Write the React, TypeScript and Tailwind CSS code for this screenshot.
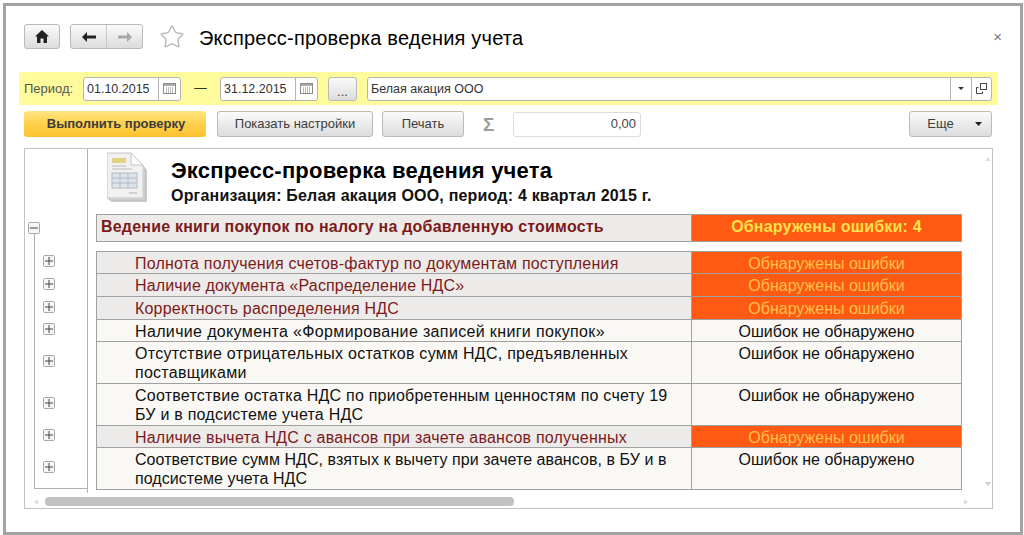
import React from 'react';
import { Star } from 'lucide-react';

type Row = { text: string[]; error: boolean; h: string; track: string };

const rows: Row[] = [
  { text: ['Полнота получения счетов-фактур по документам поступления'], error: true, h: 'h-[22px]', track: 'tracking-[0.2px]' },
  { text: ['Наличие документа «Распределение НДС»'], error: true, h: 'h-[23px]', track: 'tracking-[0.15px]' },
  { text: ['Корректность распределения НДС'], error: true, h: 'h-[23px]', track: 'tracking-[0.2px]' },
  { text: ['Наличие документа «Формирование записей книги покупок»'], error: false, h: 'h-[22px]', track: 'tracking-[0.35px]' },
  { text: ['Отсутствие отрицательных остатков сумм НДС, предъявленных', 'поставщиками'], error: false, h: 'h-[42px]', track: 'tracking-[0.27px]' },
  { text: ['Соответствие остатка НДС по приобретенным ценностям по счету 19', 'БУ и в подсистеме учета НДС'], error: false, h: 'h-[42px]', track: 'tracking-[0.23px]' },
  { text: ['Наличие вычета НДС с авансов при зачете авансов полученных'], error: true, h: 'h-[22px]', track: 'tracking-[0.2px]' },
  { text: ['Соответствие сумм НДС, взятых к вычету при зачете авансов, в БУ и в', 'подсистеме учета НДС'], error: false, h: 'h-[42px]', track: 'tracking-[0.05px]' },
];

const btn = 'flex items-center justify-center rounded-[3px] border border-[#b9b9b9] bg-gradient-to-b from-[#fbfbfb] to-[#dcdcdc] text-[13px] text-[#3d3d3d]';

const Calendar = () => (
  <svg width="13" height="11" viewBox="0 0 13 11">
    <rect x="0.5" y="0.5" width="12" height="10" fill="#fff" stroke="#8a8a8a" />
    <rect x="1" y="1" width="11" height="2" fill="#aaa" />
    <path d="M3 5h1M5 5h1M7 5h1M9 5h1M3 7h1M5 7h1M7 7h1M9 7h1M3 9h1M5 9h1M7 9h1M9 9h1" stroke="#777" />
  </svg>
);

const DateField = ({ value }: { value: string }) => (
  <div className="flex h-[24px] w-[98px] items-center rounded-[3px] border border-[#b5b5b5] bg-white text-[12.5px] text-[#333]">
    <span className="w-[74px] pl-[3px] pt-[1px]">{value}</span>
    <span className="flex h-full flex-1 items-center justify-center border-l border-[#b5b5b5]">
      <Calendar />
    </span>
  </div>
);

const TreeBox = ({ minus }: { minus?: boolean }) => (
  <svg width="12" height="12" viewBox="0 0 12 12" className="block shrink-0">
    <rect x="0.5" y="0.5" width="11" height="11" rx="1" fill="#f6f6f6" stroke="#a8a8a8" />
    <path d={minus ? 'M2 6h8' : 'M2 6h8M6 2v8'} stroke="#444" />
  </svg>
);

const DocIcon = () => (
  <svg width="42" height="52" viewBox="0 0 42 52" className="block">
    <path d="M4 6h24l12 12v32H4z" fill="#c9c9c9" />
    <path d="M2 4h24l12 12v32H2z" fill="#dedede" stroke="#bdbdbd" />
    <path d="M0 1h24l12 12v33H0z" fill="#f1f1f1" stroke="#c4c4c4" />
    <path d="M24 1v12h12z" fill="#fff" stroke="#c4c4c4" />
    <rect x="5" y="6" width="14" height="5" fill="#e3d27e" />
    <path d="M5 14h14M5 17h20" stroke="#bcbcbc" />
    <rect x="5" y="21" width="25" height="15" fill="#dde3e9" stroke="#b3bcc6" />
    <path d="M13 21v15M21 21v15M5 26h25M5 31h25" stroke="#b3bcc6" />
    <path d="M22 41h8" stroke="#b0b0b0" />
  </svg>
);

export default function App() {
  return (
    <div className="h-[535px] w-[1024px] overflow-hidden bg-white pl-[3px] pr-[1px] pt-[3px] font-['Liberation_Sans',Arial,sans-serif]">
      <div className="h-[532px] border-[3px] border-[#a3a3a3] pl-[18px] pr-[28px] pt-[18px]">
        {/* head */}
        <div className="-mr-[10px] flex h-[25px] items-center">
          <button className={`${btn} h-[25px] w-[36px]`}>
            <svg width="14" height="13" viewBox="0 0 14 13">
              <path d="M7 0 0 6.5h2V13h3.5V8.5h3V13H12V6.5h2z" fill="#222" />
            </svg>
          </button>
          <div className={`${btn} ml-[10px] h-[25px] w-[73px]`}>
            <span className="flex h-full flex-1 items-center justify-center border-r border-[#c8c8c8]">
              <svg width="14" height="10" viewBox="0 0 14 10">
                <path d="M0 5 5 0v3.5h9v3H5V10z" fill="#222" />
              </svg>
            </span>
            <span className="flex h-full w-[35px] items-center justify-center">
              <svg width="14" height="10" viewBox="0 0 14 10">
                <path d="M14 5 9 0v3.5H0v3h9V10z" fill="#a8a8a8" />
              </svg>
            </span>
          </div>
          <Star className="ml-[16px] h-[26px] w-[26px] text-[#b4b4b4]" strokeWidth={1.2} />
          <h1 className="ml-[14px] mt-[3px] text-[20px] tracking-[0.2px] text-black">Экспресс-проверка ведения учета</h1>
          <span className="ml-auto text-[15px] leading-none text-[#777]">×</span>
        </div>

        {/* period */}
        <div className="-ml-[5px] -mr-[6px] mt-[23px] flex h-[33px] items-center bg-[#fdfb9b] pl-[5px] pr-[6px]">
          <span className="w-[59px] text-[13px] text-[#555]">Период:</span>
          <DateField value="01.10.2015" />
          <span className="w-[39px] text-center text-[12.5px] text-[#333]">—</span>
          <DateField value="31.12.2015" />
          <button className={`${btn} ml-[10px] h-[24px] w-[29px] items-end pb-[2px] leading-none`}>...</button>
          <div className="ml-[10px] flex h-[24px] flex-1 items-center rounded-[3px] border border-[#b5b5b5] bg-white text-[12.5px] text-[#333]">
            <span className="flex-1 pl-[3px] pt-[1px]">Белая акация ООО</span>
            <span className="flex h-full w-[21px] items-center justify-center border-l border-[#b5b5b5]">
              <svg width="6" height="3" viewBox="0 0 6 3"><path d="M0 0h6L3 3z" fill="#333" /></svg>
            </span>
            <span className="flex h-full w-[20px] items-center justify-center border-l border-[#b5b5b5]">
              <svg width="11" height="11" viewBox="0 0 11 11" fill="none" stroke="#444">
                <rect x="4.5" y="0.5" width="6" height="6" />
                <path d="M2.5 4.5h-2v6h6v-2" />
              </svg>
            </span>
          </div>
        </div>

        {/* commands */}
        <div className="mt-[6px] flex h-[26px] items-center">
          <button className="flex h-[26px] w-[182px] items-center justify-center rounded-[3px] bg-gradient-to-b from-[#ffe680] via-[#ffd04a] to-[#fcc22f] pl-[2px] text-[13px] font-bold text-[#3d3d3d]">
            Выполнить проверку
          </button>
          <button className={`${btn} ml-[11px] h-[26px] w-[156px]`}>Показать настройки</button>
          <button className={`${btn} ml-[9px] h-[26px] w-[82px]`}>Печать</button>
          <span className="ml-[19px] w-[12px] text-[19px] font-bold leading-none text-[#9c9c9c]">Σ</span>
          <div className="ml-[18px] flex h-[25px] w-[128px] items-center justify-end rounded-[3px] border border-[#dcdcdc] bg-white pr-[4px] text-[13px] text-[#444]">
            0,00
          </div>
          <button className={`${btn} ml-auto h-[26px] w-[83px] gap-[21px] pl-[8px]`}>
            Еще
            <svg width="7" height="4" viewBox="0 0 7 4"><path d="M0 0h7L3.5 4z" fill="#222" /></svg>
          </button>
        </div>

        {/* report */}
        <div className="mt-[11px] flex h-[361px] w-[969px] flex-col border border-[#c2c2c2] bg-white">
          <div className="flex h-[344px]">
            <div className="w-[63px] shrink-0 border-r border-[#b0b0b0] pl-[3px] pt-[73px]">
              <TreeBox minus />
              <div className="ml-[6px] border-b border-l border-[#b0b0b0] pt-[16px]">
                {rows.map((r, i) => (
                  <div key={i} className={`${r.h} flex items-center pl-[8px]`}>
                    <TreeBox />
                  </div>
                ))}
              </div>
            </div>
            <div className="pl-[8px]">
              <div className="flex h-[65px]">
                <div className="ml-[11px] mt-[3px]">
                  <DocIcon />
                </div>
                <div className="ml-[22px] pt-[9px]">
                  <div className="text-[22px] font-bold leading-[26px] tracking-[0.2px] text-black">Экспресс-проверка ведения учета</div>
                  <div className="mt-[3px] text-[16px] font-bold leading-[18px] tracking-[0.2px] text-[#111]">
                    Организация: Белая акация ООО, период: 4 квартал 2015 г.
                  </div>
                </div>
              </div>
              <table className="w-[866px] table-fixed border-collapse">
                <tbody>
                  <tr className="h-[26px]">
                    <td className="w-[595px] border border-[#a0a0a0] bg-[#ecebe9] pb-[2px] pl-[4px] text-[16px] font-bold tracking-[0.2px] text-[#7c1a1a]">
                      Ведение книги покупок по налогу на добавленную стоимость
                    </td>
                    <td className="border border-[#a0a0a0] bg-[#ff5a14] pb-[2px] text-center text-[16px] font-bold tracking-[0.2px] text-[#ffe14d]">
                      Обнаружены ошибки: 4
                    </td>
                  </tr>
                </tbody>
              </table>
              <table className="mt-[9px] w-[866px] table-fixed border-collapse text-[16px] leading-[19px]">
                <tbody>
                  {rows.map((r, i) => (
                    <tr key={i} className={r.h}>
                      <td className={`w-[595px] border border-[#a0a0a0] pl-[38px] pt-[2px] align-top ${r.track} ${r.error ? 'bg-[#ecebe9] text-[#7c1a1a]' : 'bg-[#faf8f4] text-[#111]'}`}>
                        {r.text.map(line => (
                          <div key={line}>{line}</div>
                        ))}
                      </td>
                      <td className={`border border-[#a0a0a0] pt-[2px] text-center align-top ${r.error ? 'bg-[#ff5a14] text-[#ffc04a]' : 'bg-[#faf8f4] text-[#111]'}`}>
                        {r.error ? 'Обнаружены ошибки' : 'Ошибок не обнаружено'}
                      </td>
                    </tr>
                  ))}
                </tbody>
              </table>
            </div>
            <div className="ml-[23px] flex flex-col justify-between pb-[7px] pt-[8px]">
              <svg width="6" height="4" viewBox="0 0 6 4"><path d="M3 0l3 4H0z" fill="#ddd" /></svg>
              <svg width="6" height="4" viewBox="0 0 6 4"><path d="M0 0h6L3 4z" fill="#ccc" /></svg>
            </div>
          </div>
          <div className="mt-[4px] flex h-[9px] items-center pl-[9px]">
            <svg width="4" height="6" viewBox="0 0 4 6"><path d="M4 0v6L0 3z" fill="#ddd" /></svg>
            <div className="ml-[7px] h-[9px] w-[469px] rounded-[4px] bg-[#c2c2c2]" />
            <svg width="4" height="6" viewBox="0 0 4 6" className="ml-[450px]"><path d="M0 0v6l4-3z" fill="#ddd" /></svg>
          </div>
        </div>
      </div>
    </div>
  );
}
